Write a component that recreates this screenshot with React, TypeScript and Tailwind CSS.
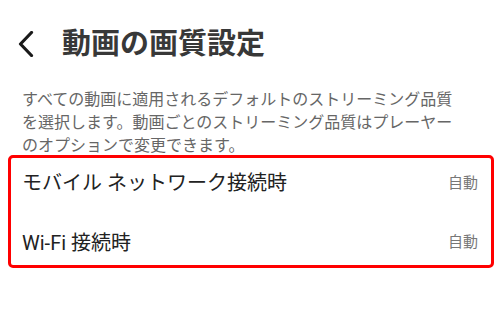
export default function App() {
  const rows = [
    { label: "モバイル ネットワーク接続時", value: "自動" },
    { label: "Wi-Fi 接続時", value: "自動" },
  ];

  return (
    <div
      className="w-[500px] h-[312px] bg-white overflow-hidden"
      style={{ fontFamily: 'Roboto, "Noto Sans CJK JP", sans-serif' }}
    >
      {/* header */}
      <div className="flex items-center h-[88px] pl-[17px]">
        <svg width="18" height="26" viewBox="0 0 18 26" className="shrink-0">
          <path
            d="M14.5 1.5 L3.5 13 L14.5 24.5"
            fill="none"
            stroke="#1a1a1a"
            strokeWidth="3.2"
            strokeLinecap="round"
            strokeLinejoin="round"
          />
        </svg>
        <h1 className="ml-[27px] text-[29px] font-bold text-[#383838] leading-none">
          動画の画質設定
        </h1>
      </div>

      {/* description */}
      <p className="ml-[22px] w-[440px] text-[16px] leading-[23px] text-[#666]">
        すべての動画に適用されるデフォルトのストリーミング品質を選択します。動画ごとのストリーミング品質はプレーヤーのオプションで変更できます。
      </p>

      {/* settings list */}
      <div className="ml-[8px] mr-[6px] -mt-[2px] border-[3px] border-[#ff0000] rounded-[5px] flex flex-col">
        {rows.map((r, i) => (
          <div
            key={r.label}
            className={
              i === 0
                ? "flex items-center justify-between h-[50px] pl-[11px] pr-[13px]"
                : "flex items-center justify-between h-[45px] mt-[12px] pl-[11px] pr-[13px]"
            }
          >
            <span className="text-[20px] text-[#222]">{r.label}</span>
            <span className="text-[15px] text-[#777]">{r.value}</span>
          </div>
        ))}
      </div>
    </div>
  );
}
